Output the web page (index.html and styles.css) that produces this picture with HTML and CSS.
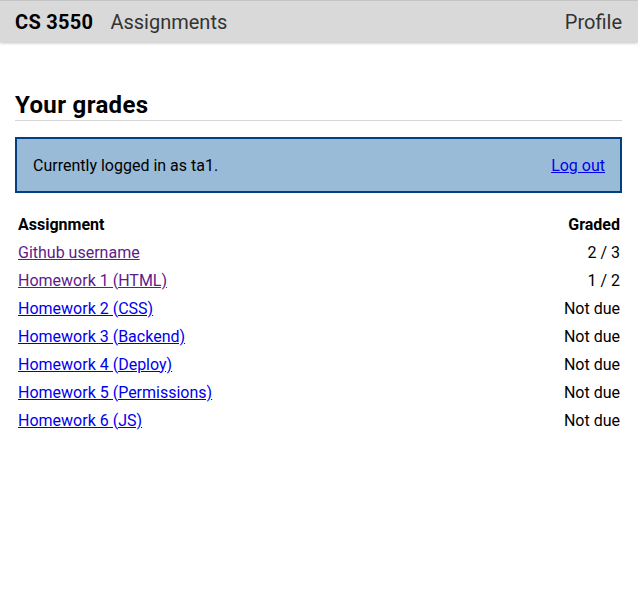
FILE: index.html
```html
<!DOCTYPE html>
<html lang="en">
<head>
<meta charset="utf-8">
<title>Your grades</title>
<link rel="stylesheet" href="styles.css">
</head>
<body>
<header class="topbar">
  <nav class="nav-left">
    <a class="brand" href="#">CS 3550</a>
    <a class="nav-link" href="#">Assignments</a>
  </nav>
  <a class="nav-link" href="#">Profile</a>
</header>
<main class="content">
  <h1 class="title">Your grades</h1>
  <div class="session">
    <span>Currently logged in as ta1.</span>
    <a class="link" href="#">Log out</a>
  </div>
  <table class="grades">
    <thead>
      <tr><th class="col-name">Assignment</th><th class="col-grade">Graded</th></tr>
    </thead>
    <tbody>
      <tr><td><a class="link visited" href="#">Github username</a></td><td class="col-grade">2 / 3</td></tr>
      <tr><td><a class="link visited" href="#">Homework 1 (HTML)</a></td><td class="col-grade">1 / 2</td></tr>
      <tr><td><a class="link" href="#">Homework 2 (CSS)</a></td><td class="col-grade">Not due</td></tr>
      <tr><td><a class="link" href="#">Homework 3 (Backend)</a></td><td class="col-grade">Not due</td></tr>
      <tr><td><a class="link" href="#">Homework 4 (Deploy)</a></td><td class="col-grade">Not due</td></tr>
      <tr><td><a class="link" href="#">Homework 5 (Permissions)</a></td><td class="col-grade">Not due</td></tr>
      <tr><td><a class="link" href="#">Homework 6 (JS)</a></td><td class="col-grade">Not due</td></tr>
    </tbody>
  </table>
</main>
</body>
</html>
```
FILE: styles.css
```css
html, body {
  margin: 0;
  padding: 0;
  background: #fff;
}
body {
  font-family: Roboto, "Noto Sans", "Liberation Sans", sans-serif;
  font-size: 16px;
  color: #000;
}
.topbar {
  display: flex;
  justify-content: space-between;
  align-items: center;
  height: 41px;
  padding: 0 16px 0 15px;
  background: #d9d9d9;
  border-top: 1px solid #c4c4c4;
  box-shadow: 0 1px 3px rgba(0,0,0,0.25);
  font-size: 20px;
}
.nav-left {
  display: flex;
  align-items: center;
  gap: 17px;
}
.topbar a {
  text-decoration: none;
  color: #333;
}
.topbar .brand {
  font-weight: bold;
  color: #000;
  letter-spacing: 0.3px;
}
.content {
  padding: 48px 16px 0 15px;
}
.title {
  margin: 0;
  font-size: 24px;
  font-weight: bold;
  letter-spacing: 0.35px;
  line-height: 30px;
  padding-bottom: 0;
  border-bottom: 1px solid #d6d6d6;
}
.session {
  margin-top: 16px;
  display: flex;
  justify-content: space-between;
  align-items: center;
  height: 52px;
  padding: 0 15px 0 16px;
  background: #99bbd8;
  border: 2px solid #004080;
}
.link {
  color: #0000ee;
}
.link.visited {
  color: #5e1b8b;
}
.grades {
  margin-top: 17px;
  width: 100%;
  border-collapse: collapse;
}
.grades th, .grades td {
  padding: 3px 2px 3px 3px;
  height: 22px;
  text-align: left;
}
.grades .col-grade {
  text-align: right;
}
```
